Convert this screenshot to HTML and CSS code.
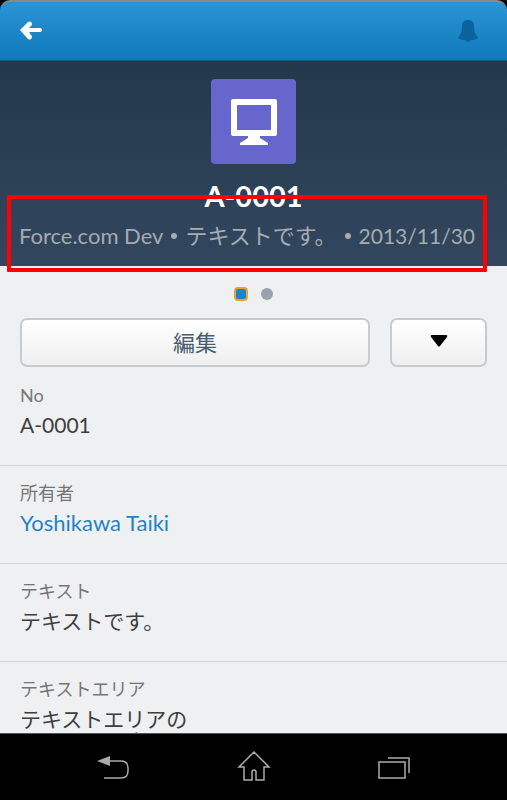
FILE: index.html
```html
<!DOCTYPE html>
<html lang="ja">
<head>
<meta charset="UTF-8">
<meta name="viewport" content="width=device-width, initial-scale=1.0">
<title>A-0001</title>
<link rel="stylesheet" href="styles.css">
</head>
<body>
<header class="topbar">
  <button class="icon-btn" aria-label="戻る">
    <svg width="24" height="20" viewBox="0 0 24 20"><path d="M1 9 L9 1 Q11 0 12 1 Q14 3 12 5 L10 7 H21 Q23 7 23 9 Q23 11 21 11 H10 L12 14 Q14 16 12 18 Q11 19 9 18 Z" fill="#fff"/></svg>
  </button>
  <button class="icon-btn" aria-label="通知">
    <svg width="22" height="24" viewBox="0 0 22 24"><path d="M11 1 C15 1 17 3 17 7 C17 13 18 15 21 18 C22 20 17 21 14 21 Q13 23 11 23 Q9 23 8 21 C5 21 0 20 1 18 C4 15 5 13 5 7 C5 3 7 1 11 1 Z" fill="#0c639c"/></svg>
  </button>
</header>

<main class="content">
  <section class="hero">
    <div class="record-icon">
      <svg width="48" height="48" viewBox="0 0 48 48"><path d="M3 1 H45 Q47 1 47 3 V36 Q47 38 45 38 H30 V40 L38 45 V47 H10 V45 L18 40 V38 H3 Q1 38 1 36 V3 Q1 1 3 1 Z M7 7 V32 H41 V7 Z" fill="#fff" fill-rule="evenodd"/></svg>
    </div>
    <h1>A-0001</h1>
    <p class="summary">
      <span>Force.com Dev</span><span class="bullet"></span><span>テキストです。</span><span class="bullet"></span><span class="date">2013/11/30</span>
    </p>
    <div class="highlight"></div>
  </section>

  <div class="pager">
    <span class="dot active"></span>
    <span class="dot"></span>
  </div>

  <div class="actions">
    <button class="btn edit">編集</button>
    <button class="btn more" aria-label="その他">
      <svg width="18" height="13" viewBox="0 0 18 13"><path d="M2 1 H16 Q18 1 17 3 L10 12 Q9 13 8 12 L1 3 Q0 1 2 1 Z" fill="#000"/></svg>
    </button>
  </div>

  <dl class="fields">
    <div class="field">
      <dt>No</dt>
      <dd>A-0001</dd>
    </div>
    <div class="field">
      <dt>所有者</dt>
      <dd><a href="#">Yoshikawa Taiki</a></dd>
    </div>
    <div class="field">
      <dt>テキスト</dt>
      <dd>テキストです。</dd>
    </div>
    <div class="field">
      <dt>テキストエリア</dt>
      <dd>テキストエリアの<br>テキストです。</dd>
    </div>
  </dl>
</main>

<nav class="navbar">
  <button class="icon-btn" aria-label="Back">
    <svg width="34" height="26" viewBox="0 0 34 26"><path d="M1 7 L14 2 V12 Z" fill="#aaa"/><path d="M13 7 H25 Q32 7 32 14 V17 Q32 24 25 24 H8" fill="none" stroke="#aaa" stroke-width="1.5"/></svg>
  </button>
  <button class="icon-btn" aria-label="Home">
    <svg width="34" height="32" viewBox="0 0 34 32"><path d="M17 1 L32 16 H27 V29 H19 V21 Q19 19 17 19 Q15 19 15 21 V29 H7 V16 H2 Z" fill="none" stroke="#aaa" stroke-width="1.5"/></svg>
  </button>
  <button class="icon-btn" aria-label="Recent">
    <svg width="34" height="26" viewBox="0 0 34 26"><path d="M2 8 H28 V24 H2 Z M11 4 H32 V19" fill="none" stroke="#aaa" stroke-width="1.5"/></svg>
  </button>
</nav>
</body>
</html>
```
FILE: styles.css
```css
* {
  box-sizing: border-box;
}
body {
  margin: 0;
  height: 100vh;
  display: flex;
  flex-direction: column;
  overflow: hidden;
  background-color: #000;
  color: #3c3e40;
  font-family: Lato, "Noto Sans CJK JP", sans-serif;
  font-size: 21px;
}
button {
  font-family: inherit;
  cursor: pointer;
}
.icon-btn {
  display: flex;
  padding: 0;
  border: 0;
  background: none;
}
.topbar {
  display: flex;
  justify-content: space-between;
  align-items: center;
  flex: none;
  height: 61px;
  padding: 0 28px 0 19px;
  border-top: 2px solid #8a8a8a;
  border-bottom: 1px solid #0e5c8f;
  border-radius: 10px 10px 0 0;
  background: linear-gradient(#2a94d6, #1079bc);
}
.content {
  flex: 1;
  min-height: 0;
  overflow: hidden;
  background-color: #eff0f2;
}
.hero {
  position: relative;
  display: flex;
  flex-direction: column;
  align-items: center;
  padding: 18px 8px 14px;
  background: linear-gradient(#24384c, #32475e);
}
.record-icon {
  display: flex;
  justify-content: center;
  align-items: center;
  width: 85px;
  height: 85px;
  border-radius: 4px;
  background-color: #6766cc;
}
h1 {
  margin: 16px 0 8px;
  color: #fff;
  font-size: 29px;
  line-height: 32px;
}
.summary {
  display: flex;
  align-items: center;
  gap: 8px;
  margin: 0 13px 0 0;
  color: #a5abb1;
  font-size: 22px;
  line-height: 32px;
  white-space: nowrap;
}
.summary .date {
  font-size: 21px;
}
.bullet {
  width: 6px;
  height: 6px;
  border-radius: 50%;
  background-color: #a5abb1;
}
/* red frame over the summary line */
.highlight {
  position: absolute;
  left: 7px;
  right: 20px;
  bottom: -6px;
  height: 77px;
  border: 4px solid #f00;
  border-radius: 1px;
}
.pager {
  display: flex;
  justify-content: center;
  align-items: center;
  gap: 13px;
  height: 52px;
  padding-top: 4px;
}
.dot {
  width: 12px;
  height: 12px;
  border-radius: 50%;
  background-color: #9aa3ad;
}
.dot.active {
  width: 14px;
  height: 14px;
  border: 2px solid #e8a433;
  border-radius: 4px;
  background-color: #1f84c6;
}
.actions {
  display: flex;
  gap: 20px;
  padding: 0 20px;
}
.btn {
  display: flex;
  justify-content: center;
  align-items: center;
  height: 49px;
  padding: 0 0 4px;
  border: 2px solid #c8cbce;
  border-radius: 7px;
  background: linear-gradient(#fff, #efefef);
  color: #465d72;
  font-size: 22px;
}
.edit {
  flex: 1;
}
.more {
  width: 97px;
}
.fields {
  margin: 0;
  padding-top: 1px;
}
.field {
  padding: 13px 20px 29px;
  border-bottom: 1px solid #d0d4d8;
}
.field dt {
  color: #73777a;
  font-size: 18px;
  line-height: 28px;
}
.field dd {
  margin: 5px 0 0;
  line-height: 22px;
}
.field a {
  color: #1f84c6;
  font-size: 22px;
  text-decoration: none;
}
.navbar {
  display: flex;
  justify-content: space-between;
  align-items: center;
  flex: none;
  height: 67px;
  padding: 0 96px;
  border-top: 1px solid #555;
}
```
